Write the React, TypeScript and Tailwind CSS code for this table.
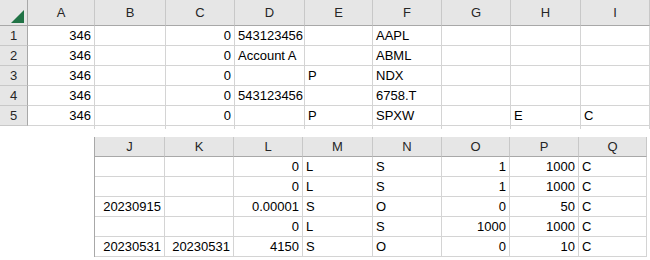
import React from 'react';

type Cell = { v: string; num?: boolean };

const topLetters = ['A', 'B', 'C', 'D', 'E', 'F', 'G', 'H', 'I'];
const bottomLetters = ['J', 'K', 'L', 'M', 'N', 'O', 'P', 'Q'];

const n = (v: string): Cell => ({ v, num: true });
const t = (v: string): Cell => ({ v });
const e: Cell = { v: '' };

const topRows: Cell[][] = [
  [n('346'), e, n('0'), t('543123456'), e, t('AAPL'), e, e, e],
  [n('346'), e, n('0'), t('Account A'), e, t('ABML'), e, e, e],
  [n('346'), e, n('0'), e, t('P'), t('NDX'), e, e, e],
  [n('346'), e, n('0'), t('543123456'), e, t('6758.T'), e, e, e],
  [n('346'), e, n('0'), e, t('P'), t('SPXW'), e, t('E'), t('C')],
];

const bottomRows: Cell[][] = [
  [e, e, n('0'), t('L'), t('S'), n('1'), n('1000'), t('C')],
  [e, e, n('0'), t('L'), t('S'), n('1'), n('1000'), t('C')],
  [n('20230915'), e, n('0.00001'), t('S'), t('O'), n('0'), n('50'), t('C')],
  [e, e, n('0'), t('L'), t('S'), n('1000'), n('1000'), t('C')],
  [n('20230531'), n('20230531'), n('4150'), t('S'), t('O'), n('0'), n('10'), t('C')],
];

function DataCell({ cell }: { cell: Cell }) {
  return (
    <div
      className={`h-[20px] border-r border-b border-[#d4d4d4] flex items-end pb-[2px] leading-[14px] overflow-hidden whitespace-nowrap text-black ${
        cell.num ? 'justify-end pr-[3px]' : 'justify-start pl-[3px]'
      }`}
    >
      {cell.v}
    </div>
  );
}

function HeadCell({ label, tall }: { label: string; tall?: boolean }) {
  return (
    <div
      className={`${tall ? 'h-[26px]' : 'h-[20px]'} bg-[#e6e6e6] border-r border-[#c8c8c8] border-b border-b-[#a8a8a8] flex items-center justify-center text-[#262626] pt-[1px]`}
    >
      {label}
    </div>
  );
}

export default function App() {
  return (
    <div
      className="w-[650px] h-[260px] bg-white overflow-hidden text-[13px]"
      style={{ fontFamily: '"Liberation Sans", Arial, sans-serif' }}
    >
      {/* Top block: rows 1-5, columns A-I */}
      <div className="grid grid-cols-[28px_67px_71px_69px_70px_68px_69px_69px_70px_69px]">
        <div className="h-[26px] bg-[#e6e6e6] border-r border-r-[#a8a8a8] border-b border-b-[#a8a8a8] flex items-end justify-end pr-[3px] pb-[2px]">
          <svg width="13" height="13" viewBox="0 0 13 13">
            <polygon points="13,0 13,13 0,13" fill="#217346" />
          </svg>
        </div>
        {topLetters.map((l) => (
          <HeadCell key={l} label={l} tall />
        ))}
        {topRows.map((row, i) => (
          <React.Fragment key={i}>
            <div className="h-[20px] bg-[#e6e6e6] border-r border-r-[#a8a8a8] border-b border-[#c8c8c8] flex items-end justify-center pb-[2px] leading-[14px] text-[#262626]">
              {i + 1}
            </div>
            {row.map((c, j) => (
              <DataCell key={j} cell={c} />
            ))}
          </React.Fragment>
        ))}
        <div className="h-[3px]" />
        {topLetters.map((l) => (
          <div key={l} className="h-[3px] border-r border-[#d4d4d4]" />
        ))}
      </div>

      {/* Bottom block: columns J-Q */}
      <div className="mt-[8px] ml-[94px] border-l border-[#a8a8a8] grid grid-cols-[70px_69px_69px_70px_69px_68px_69px_68px] w-max">
        {bottomLetters.map((l) => (
          <HeadCell key={l} label={l} />
        ))}
        {bottomRows.map((row, i) => (
          <React.Fragment key={i}>
            {row.map((c, j) => (
              <DataCell key={j} cell={c} />
            ))}
          </React.Fragment>
        ))}
      </div>
    </div>
  );
}
